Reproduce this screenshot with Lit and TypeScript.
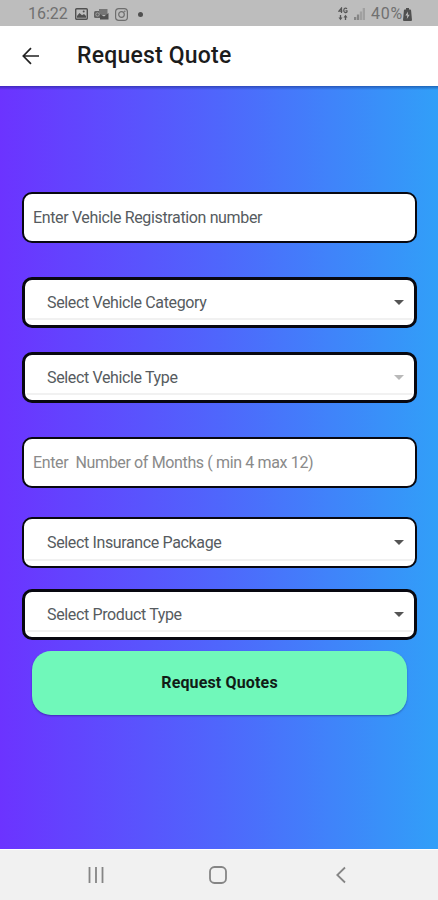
import { LitElement, html, css, svg } from "lit";
import { customElement, property } from "lit/decorators.js";
import { classMap } from "lit/directives/class-map.js";

@customElement("status-bar")
class StatusBar extends LitElement {
  static styles = css`
    :host { display: flex; align-items: center; height: 26px; box-sizing: border-box; padding: 2px 26px 0 28px; background: #bdbdbd; color: #707070; font: 400 16px/20px Roboto, sans-serif; }
    .time { width: 47px; white-space: nowrap; }
    .battery { letter-spacing: .8px; }
    .spacer { flex: 1; }
    svg { display: block; flex: none; }
    .photo { width: 13px; height: 12px; }
    .mail { width: 15px; height: 12px; margin-left: 6px; }
    .camera { width: 13px; height: 13px; margin-left: 6px; }
    .dot { width: 5px; height: 5px; border-radius: 50%; background: #505050; margin-left: 10px; }
    .network { width: 10px; height: 14px; margin-right: 6px; }
    .signal { width: 11px; height: 12px; margin-right: 6px; }
    .cell { width: 9px; height: 13px; }
  `;
  render() {
    return html`
      <span class="time">16:22</span>
      <svg class="photo" viewBox="0 0 13 12"><rect x=".7" y=".7" width="11.6" height="10.6" rx="1" fill="none" stroke="#505050" stroke-width="1.4"/><path d="M2 9.8V8l2.500-3 2.500 2.300L9 6l2 2v1.800z" fill="#505050"/><circle cx="8.700" cy="3.600" r="1" fill="#505050"/></svg>
      <svg class="mail" viewBox="0 0 15 12"><rect x="0" y="3" width="7" height="7" rx="1.500" fill="#626262"/><path d="M5 1h8.500v6H5z" fill="#757575"/><path d="M6 6l4 2.400L14.500 5v6.500H6z" fill="#505050"/><circle cx="3.500" cy="6.500" r="1.700" fill="none" stroke="#a5a5a5"/></svg>
      <svg class="camera" viewBox="0 0 13 13"><rect x=".6" y=".6" width="11.800" height="11.800" rx="3.200" fill="none" stroke="#6e6e6e" stroke-width="1.200"/><circle cx="6.500" cy="6.500" r="2.800" fill="none" stroke="#6e6e6e" stroke-width="1.200"/><circle cx="9.800" cy="3.200" r=".8" fill="#6e6e6e"/></svg>
      <span class="dot"></span>
      <span class="spacer"></span>
      <svg class="network" viewBox="0 0 10 14"><path d="M3.500 6V1L.8 4.200h3.600M9 1.800C7.500.4 5.800 1.400 5.800 3.400S7.800 6.500 9 5V3.800H7.500" fill="none" stroke="#555" stroke-width="1.200"/><path d="M2.500 8v3M7.500 13v-3" stroke="#555" stroke-width="1.300"/><path d="M.5 10.500h4L2.500 13.200zM5.500 10.500h4L7.500 7.800z" fill="#555"/></svg>
      <svg class="signal" viewBox="0 0 11 12">${[3, 5.5, 8.5, 12].map((h, i) => svg`<rect x=${i * 2.9} y=${12 - h} width="2.300" height=${h} fill=${i < 2 ? "#858585" : "#a0a0a0"}/>`)}</svg>
      <span class="battery">40%</span>
      <svg class="cell" viewBox="0 0 9 13"><path d="M3 0h3v1.500h1.200q.8 0 .9 1L9 12q0 1-1 1H1q-1 0-1-1l.9-9.500q.1-1 .9-1H3z" fill="#505050"/><path d="M5 3.500L2.400 7.500h1.900L3.800 11 6.700 6.800H4.800z" fill="#bdbdbd"/></svg>
    `;
  }
}

@customElement("form-field")
class FormField extends LitElement {
  @property() label = "";
  @property({ type: Boolean }) select = false;
  @property({ type: Boolean }) muted = false;
  @property({ type: Boolean }) disabled = false;
  @property({ type: Boolean }) heavy = false;
  static styles = css`
    :host { display: block; }
    .box { display: flex; align-items: center; box-sizing: border-box; height: 51px; padding: 0 11px 0 9px; border: 2px solid #080810; border-radius: 10px; background: #fff; color: #565b60; font: 400 16px/20px Roboto, sans-serif; letter-spacing: -.36px; }
    .heavy { border-width: 3px; padding: 0 10px 0 8px; }
    .select { position: relative; padding-left: 23px; }
    .select.heavy { padding-left: 22px; }
    .muted { color: #8a8a8a; }
    .label { flex: 1; white-space: pre; }
    .line { position: absolute; left: 2px; right: 2px; bottom: 5px; height: 2px; background: #f1f1f1; }
    .arrow { width: 10px; height: 5px; flex: none; fill: #555; }
    .disabled .arrow { fill: #b9b9b9; }
  `;
  render() {
    const classes = { box: true, select: this.select, muted: this.muted, disabled: this.disabled, heavy: this.heavy };
    return html`<div class=${classMap(classes)}>
      <span class="label">${this.label}</span>
      ${this.select ? html`<svg class="arrow" viewBox="0 0 10 5"><path d="M0 0h10L5 5z"/></svg><span class="line"></span>` : ""}
    </div>`;
  }
}

@customElement("app-root")
class AppRoot extends LitElement {
  static styles = css`
    :host { display: flex; flex-direction: column; width: 438px; height: 900px; overflow: hidden; font-family: Roboto, sans-serif; background: #fff; }
    header { display: flex; align-items: center; height: 60px; box-sizing: border-box; padding: 0 22px; background: #fff; flex: none; }
    .back { width: 18px; height: 18px; margin-right: 37px; }
    h1 { margin: 0; color: #1c1c1c; font: 500 23px/28px Roboto, sans-serif; letter-spacing: .2px; white-space: nowrap; }
    main { flex: 1; box-sizing: border-box; padding: 106px 21px 0 22px; background: linear-gradient(rgba(0, 20, 90, .4), rgba(0, 20, 90, 0) 4px), linear-gradient(90deg, #6c33ff, #4f66fc 50%, #319ff8); }
    .first { margin-bottom: 34px; }
    .category { margin-bottom: 24px; }
    .type { margin-bottom: 34px; }
    .months { margin-bottom: 29px; }
    .package { margin-bottom: 21px; }
    button { display: block; width: 375px; height: 64px; margin: 11px 0 0 10px; padding: 0 0 1px; border: 0; border-radius: 19px; background: #70f8ba; color: #101c16; font: 700 16px/20px Roboto, sans-serif; letter-spacing: .15px; box-shadow: 0 1px 2px rgba(0, 0, 60, .35); }
    nav { display: flex; align-items: center; height: 51px; box-sizing: border-box; padding: 0 0 0 87px; border-top: 1px solid #fff; background: #f1f1f1; flex: none; }
    nav svg { fill: none; stroke: #858585; stroke-width: 1.8; }
    .recent, .home { width: 18px; height: 18px; }
    .home { margin: 0 109px 0 104px; }
    .previous { width: 10px; height: 18px; }
  `;
  render() {
    return html`
      <status-bar></status-bar>
      <header>
        <svg class="back" viewBox="0 0 18 18" fill="none" stroke="#222" stroke-width="1.7"><path d="M17 9H1.500M9 1.200L1.300 9 9 16.800"/></svg>
        <h1>Request Quote</h1>
      </header>
      <main>
        <form-field class="first" label="Enter Vehicle Registration number"></form-field>
        <form-field class="category" select heavy label="Select Vehicle Category"></form-field>
        <form-field class="type" select heavy disabled label="Select Vehicle Type"></form-field>
        <form-field class="months" muted label="Enter  Number of Months ( min 4 max 12)"></form-field>
        <form-field class="package" select label="Select Insurance Package"></form-field>
        <form-field select heavy label="Select Product Type"></form-field>
        <button>Request Quotes</button>
      </main>
      <nav>
        <svg class="recent" viewBox="0 0 18 18"><path d="M2.500 1v16M9 1v16M15.500 1v16"/></svg>
        <svg class="home" viewBox="0 0 18 18"><rect x="1" y="1" width="16" height="16" rx="4.500"/></svg>
        <svg class="previous" viewBox="0 0 10 18"><path d="M9 1.500L1.300 9 9 16.500"/></svg>
      </nav>
    `;
  }
}
